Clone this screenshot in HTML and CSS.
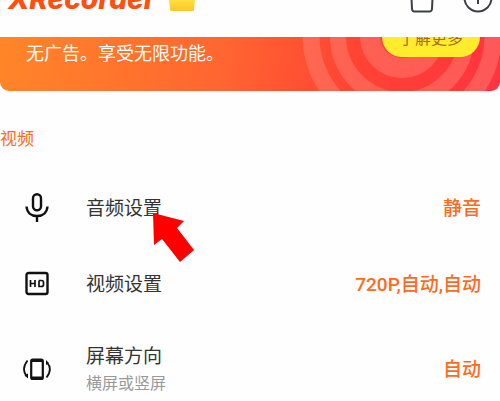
FILE: index.html
```
<!DOCTYPE html>
<html lang="zh-CN">
<head>
<meta charset="utf-8">
<title>XRecorder</title>
<meta name="viewport" content="width=device-width, initial-scale=1">
<link rel="stylesheet" href="styles.css">
</head>
<body>
<header class="topbar">
  <h1 class="brand">XRecorder</h1>
  <svg class="badge" width="28" height="32" viewBox="0 0 28 32" aria-hidden="true">
    <defs><linearGradient id="gold" x1="0" y1="0" x2="0" y2="1"><stop offset="0.6" stop-color="#ffdf3c"/><stop offset="1" stop-color="#fbc52c"/></linearGradient></defs>
    <path d="M0 10 7 15 14 5 21 15 28 10 26 30.500Q26 32 24 32H4Q2 32 2 30.500Z" fill="url(#gold)"/>
  </svg>
  <div class="tools">
    <button class="tool" type="button" aria-label="清理">
      <svg width="26" height="30" viewBox="0 0 26 30"><path d="M1 5H25M2 5 3 26Q3.200 28.500 5.500 28.500H20.500Q22.700 28.500 23 26L24 5" fill="none" stroke="#3d3f45" stroke-width="2"/></svg>
    </button>
    <button class="tool" type="button" aria-label="信息">
      <svg width="30" height="30" viewBox="0 0 30 30"><circle cx="15" cy="15" r="13.500" fill="none" stroke="#3d3f45" stroke-width="2"/><path d="M15 13V21M15 8V10" stroke="#3d3f45" stroke-width="2"/></svg>
    </button>
  </div>
</header>
<main>
  <section class="promo">
    <svg class="rings" width="200" height="54" viewBox="0 0 200 54" aria-hidden="true">
      <g fill="none" stroke="#ff8a7c" stroke-opacity="0.42">
        <circle cx="102" cy="-1" r="32" stroke-width="20"/>
        <circle cx="102" cy="-1" r="64" stroke-width="16"/>
        <circle cx="102" cy="-1" r="91" stroke-width="17"/>
      </g>
    </svg>
    <p class="promo-text">无广告。享受无限功能。</p>
    <button class="more" type="button">了解更多</button>
  </section>
  <h2 class="section-title">视频</h2>
  <ul class="settings">
    <li class="row">
      <svg class="icon" width="30" height="32" viewBox="0 0 30 32" aria-hidden="true">
        <g fill="none" stroke="#111" stroke-width="2.400"><rect x="11" y="1.200" width="8" height="16" rx="4"/><path d="M4.500 13.500C5 19.500 9 23 15 23S25 19.500 25.500 13.500M15 23V29"/></g>
      </svg>
      <div class="label"><span class="name">音频设置</span></div>
      <span class="value">静音</span>
      <svg class="pointer" width="42" height="50" viewBox="0 0 42 50" aria-hidden="true"><path d="M0 0 31 8 24 15 41 37 27 49 9 26 1 32Z" fill="#fe0000"/></svg>
    </li>
    <li class="row">
      <svg class="icon" width="30" height="32" viewBox="0 0 30 32" aria-hidden="true">
        <g fill="none" stroke="#111"><rect x="4.500" y="4" width="21" height="21" rx="2" stroke-width="2.400"/><path d="M8.500 11V18M13 11V18M8.500 14.500H13M17 11.500V17.500H19.500Q21.500 17.500 21.500 15.500V13.500Q21.500 11.500 19.500 11.500H17" stroke-width="1.700"/></g>
      </svg>
      <div class="label"><span class="name">视频设置</span></div>
      <span class="value">720P,自动,自动</span>
    </li>
    <li class="row row-tall">
      <svg class="icon" width="30" height="32" viewBox="0 0 30 32" aria-hidden="true">
        <g fill="none" stroke="#111"><rect x="9.200" y="5.500" width="11.600" height="19.500" rx="1.500" stroke-width="2.200"/><path d="M9.200 7H20.800M9.200 23.500H20.800" stroke-width="2"/><path d="M5.500 6.500Q-1 15 4.500 22M25 8.500Q31 15 24.500 23.500" stroke-width="1.800"/></g>
        <path d="M2.500 21.500 6 19.500V24.500ZM24 6V11L27 9Z" fill="#111"/>
      </svg>
      <div class="label"><span class="name">屏幕方向</span><span class="hint">横屏或竖屏</span></div>
      <span class="value">自动</span>
    </li>
  </ul>
</main>
</body>
</html>
```

FILE: styles.css
```
* {
  box-sizing: border-box;
}

body {
  margin: 0;
  overflow: hidden;
  background: #fefefe;
  color: #333;
  font-family: Roboto, "Noto Sans CJK SC", sans-serif;
}

h1, h2, p, ul {
  margin: 0;
  padding: 0;
  font-weight: 400;
}

button {
  border: 0;
  padding: 0;
  font-family: inherit;
}

.topbar {
  display: flex;
  align-items: flex-end;
  height: 37px;
  padding: 0 7px 24px 8px;
  overflow: hidden;
}

.brand {
  color: #ff5012;
  font-family: Inter, sans-serif;
  font-size: 28px;
  font-style: italic;
  font-weight: 800;
  line-height: 28px;
}

.badge {
  flex: none;
  margin: 0 0 2px 12px;
}

.tools {
  display: flex;
  gap: 28px;
  margin-left: auto;
}

.tool {
  background: none;
}

.tool svg {
  display: block;
}

.promo {
  position: relative;
  display: flex;
  align-items: flex-end;
  justify-content: space-between;
  height: 54px;
  padding: 0 20px 0 26px;
  overflow: hidden;
  border-radius: 0 0 9px 9px;
  background: linear-gradient(100deg, #ff8628, #ff6531 45%, #ff4434 70%, #ff3340);
}

.rings {
  position: absolute;
  top: 0;
  right: 0;
}

.promo-text {
  padding-bottom: 25px;
  color: #fff;
  font-size: 18px;
  line-height: 24px;
}

.more {
  position: relative;
  flex: none;
  width: 98px;
  height: 40px;
  margin-bottom: 34px;
  border-radius: 20px;
  background: #ffec2c;
  color: #a76a1b;
  font-size: 16px;
}

.section-title {
  padding: 36px 0 20px;
  color: #ff6a21;
  font-size: 17px;
  line-height: 24px;
}

.settings {
  list-style: none;
}

.row {
  position: relative;
  display: flex;
  align-items: center;
  height: 76px;
  padding: 0 19px 0 22px;
}

.row-tall {
  height: 94px;
}

.icon {
  flex: none;
  margin-right: 34px;
}

.label {
  display: flex;
  flex: 1;
  flex-direction: column;
}

.name {
  font-size: 19px;
  line-height: 28px;
}

.hint {
  color: #999;
  font-size: 16px;
  line-height: 26px;
}

.value {
  color: #ff6a21;
  font-size: 19px;
  font-weight: 500;
  line-height: 28px;
}

.pointer {
  position: absolute;
  top: 42px;
  left: 153px;
}
```
